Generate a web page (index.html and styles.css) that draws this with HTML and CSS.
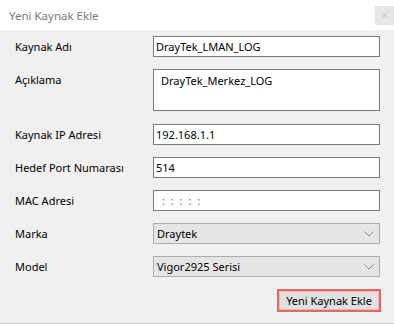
FILE: index.html
```html
<!DOCTYPE html>
<html lang="tr">
<head>
<meta charset="utf-8">
<link rel="stylesheet" href="styles.css">
</head>
<body>
<div class="window">
  <div class="titlebar">
    <span class="title">Yeni Kaynak Ekle</span>
    <span class="close">×</span>
  </div>
  <div class="form">
    <div class="row"><label>Kaynak Adı</label><div class="field input">DrayTek_LMAN_LOG</div></div>
    <div class="row top"><label class="lbl-top">Açıklama</label><div class="field area">DrayTek_Merkez_LOG</div></div>
    <div class="row"><label>Kaynak IP Adresi</label><div class="field input">192.168.1.1</div></div>
    <div class="row"><label>Hedef Port Numarası</label><div class="field input">514</div></div>
    <div class="row"><label>MAC Adresi</label><div class="field input mac">: : : : :</div></div>
    <div class="row"><label>Marka</label><div class="field select"><span>Draytek</span><svg class="chev" width="10" height="6" viewBox="0 0 10 6"><path d="M0.5 0.5 L5 5 L9.5 0.5" fill="none" stroke="#8a8a8a" stroke-width="1"/></svg></div></div>
    <div class="row"><label>Model</label><div class="field select"><span>Vigor2925 Serisi</span><svg class="chev" width="10" height="6" viewBox="0 0 10 6"><path d="M0.5 0.5 L5 5 L9.5 0.5" fill="none" stroke="#8a8a8a" stroke-width="1"/></svg></div></div>
    <div class="actions"><button class="btn">Yeni Kaynak Ekle</button></div>
  </div>
</div>
</body>
</html>
```
FILE: styles.css
```css
html, body {
  margin: 0;
  padding: 0;
  background: #f0f0f0;
}
.window {
  width: 394px;
  height: 323px;
  font-family: "Noto Sans", "Open Sans", sans-serif;
  font-size: 11px;
  color: #000;
  background: #f0f0f0;
  border-bottom: 1px solid #c8c8c8;
  display: flex;
  flex-direction: column;
}
.titlebar {
  height: 30px;
  background: #fff;
  display: flex;
  align-items: center;
  justify-content: space-between;
  padding-left: 9px;
}
.title {
  color: #7a7a7a;
  font-size: 11.5px;
}
.close {
  width: 19px;
  height: 19px;
  margin-top: 1px;
  background: #e6e6e6;
  color: #c8c8c8;
  font-size: 12px;
  line-height: 19px;
  text-align: center;
}
.form {
  padding: 6px 14px 0 15px;
  display: flex;
  flex-direction: column;
  gap: 12px;
}
.row {
  display: grid;
  grid-template-columns: 138px 227px;
  align-items: center;
}
.row.top {
  align-items: start;
  margin-bottom: 1px;
}
.lbl-top {
  padding-top: 3px;
}
.field {
  box-sizing: border-box;
  background: #fff;
  border: 1px solid #7a7a7a;
  height: 21px;
  line-height: 19px;
  padding-left: 2px;
  white-space: nowrap;
}
.area {
  height: 42px;
  padding-left: 7px;
  padding-top: 1px;
}
.mac {
  padding-left: 8px;
  color: #6d6d6d;
  word-spacing: 3px;
}
.select {
  background: #e5e5e5;
  border-color: #adadad;
  display: flex;
  align-items: center;
  justify-content: space-between;
  padding-left: 3px;
  padding-right: 5px;
}
.chev {
  display: block;
}
.actions {
  display: flex;
  justify-content: flex-end;
}
.btn {
  box-sizing: border-box;
  width: 104px;
  height: 23px;
  margin-right: -1px;
  font-family: inherit;
  font-size: 11px;
  color: #000;
  background: #e1e1e1;
  border: 2px solid #e06a6a;
  box-shadow: inset 0 0 0 1px #f2b4b4;
  padding: 0;
}
```
